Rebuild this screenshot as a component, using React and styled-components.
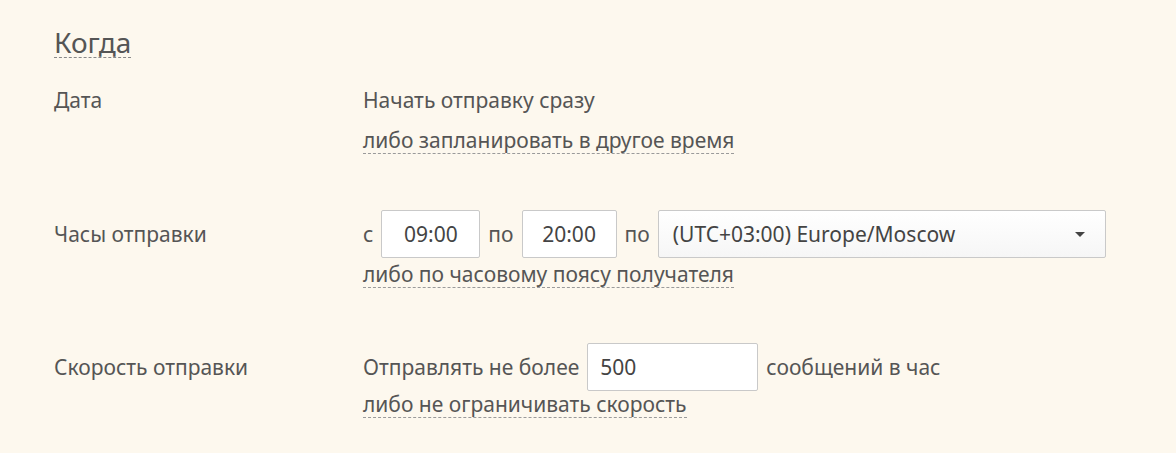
import React from 'react'
import styled, { createGlobalStyle } from 'styled-components'

const GlobalStyle = createGlobalStyle`
  html, body {
    margin: 0;
    padding: 0;
    background: #fdf8ee;
  }
  body {
    font-family: 'Noto Sans', 'Open Sans', sans-serif;
    color: #555;
  }
`

const Page = styled.section`
  width: 1176px;
  height: 453px;
  box-sizing: border-box;
  padding: 27px 0 0 54px;
  background: #fdf8ee;
`

const Header = styled.div`
  display: flex;
  margin-bottom: 29px;
`

const Title = styled.h2`
  margin: 0;
  font-size: 28px;
  font-weight: 400;
  line-height: 30px;
  color: #555;
  border-bottom: 1px dashed #888;
`

const Row = styled.div`
  display: grid;
  grid-template-columns: 309px 1fr;
  margin-bottom: ${(p) => p.$gap || 0}px;
`

const Label = styled.div`
  font-size: 21px;
  line-height: ${(p) => p.$lh || 26}px;
  color: #555;
`

const Field = styled.div`
  display: flex;
  flex-direction: column;
  gap: ${(p) => p.$gap || 0}px;
`

const Line = styled.div`
  display: flex;
  align-items: center;
  gap: 8px;
  font-size: 21px;
  line-height: 26px;
  color: #555;
`

const Link = styled.a`
  align-self: flex-start;
  font-size: 21px;
  line-height: 26px;
  color: #555;
  text-decoration: none;
  border-bottom: 1px dashed #9a9a9a;
  cursor: pointer;
`

const Input = styled.div`
  box-sizing: border-box;
  width: ${(p) => p.$w}px;
  height: 48px;
  padding: 0 ${(p) => (p.$left ? 12 : 0)}px;
  display: flex;
  align-items: center;
  justify-content: ${(p) => (p.$left ? 'flex-start' : 'center')};
  background: #fff;
  border: 1px solid #c9c9c9;
  border-radius: 2px;
  font-size: 21px;
  color: #444;
`

const Select = styled.div`
  box-sizing: border-box;
  width: 448px;
  height: 48px;
  padding: 0 20px 0 14px;
  display: flex;
  align-items: center;
  justify-content: space-between;
  background: linear-gradient(#fff, #f6f6f6);
  border: 1px solid #c9c9c9;
  border-radius: 2px;
  font-size: 21px;
  color: #444;
`

const Caret = styled.span`
  width: 0;
  height: 0;
  border-left: 5px solid transparent;
  border-right: 5px solid transparent;
  border-top: 5px solid #444;
`

export default function App() {
  return (
    <>
      <GlobalStyle />
      <Page>
        <Header>
          <Title>Когда</Title>
        </Header>
        <Row $gap={56}>
          <Label>Дата</Label>
          <Field $gap={14}>
            <Line>Начать отправку сразу</Line>
            <Link>либо запланировать в другое время</Link>
          </Field>
        </Row>
        <Row $gap={55}>
          <Label $lh={48}>Часы отправки</Label>
          <Field $gap={3}>
            <Line>
              с<Input $w={99}>09:00</Input>
              по<Input $w={95}>20:00</Input>
              по
              <Select>
                (UTC+03:00) Europe/Moscow
                <Caret />
              </Select>
            </Line>
            <Link>либо по часовому поясу получателя</Link>
          </Field>
        </Row>
        <Row>
          <Label $lh={48}>Скорость отправки</Label>
          <Field $gap={0}>
            <Line>
              Отправлять не более
              <Input $w={171} $left>500</Input>
              сообщений в час
            </Line>
            <Link>либо не ограничивать скорость</Link>
          </Field>
        </Row>
      </Page>
    </>
  )
}
